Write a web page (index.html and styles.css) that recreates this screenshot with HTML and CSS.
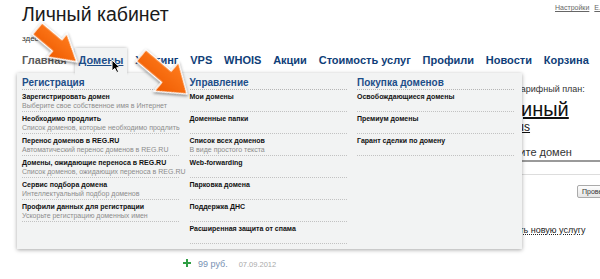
FILE: index.html
```html
<!DOCTYPE html>
<html>
<head>
    <title>Личный кабинет</title>
    <link rel="stylesheet" href="styles.css">
</head>
<body>
    <div class="header">
        <h1 class="title">Личный кабинет</h1>
        <div class="top-links"><a href="#">Настройки</a><a href="#">Е.Аксенова</a></div>
    </div>
    <div class="greeting">здесь</div>

    <div class="menu">
        <a href="#" class="menu-item home">Главная</a>
        <a href="#" class="menu-item active">Домены</a>
        <a href="#" class="menu-item">Хостинг</a>
        <a href="#" class="menu-item">VPS</a>
        <a href="#" class="menu-item">WHOIS</a>
        <a href="#" class="menu-item">Акции</a>
        <a href="#" class="menu-item">Стоимость услуг</a>
        <a href="#" class="menu-item">Профили</a>
        <a href="#" class="menu-item">Новости</a>
        <a href="#" class="menu-item">Корзина</a>

        <div class="dropdown">
            <div class="col">
                <h3 class="col-title">Регистрация</h3>
                <div class="item">
                    <div class="item-name">Зарегистрировать домен</div>
                    <div class="item-desc">Выберите свое собственное имя в Интернет</div>
                </div>
                <div class="item">
                    <div class="item-name">Необходимо продлить</div>
                    <div class="item-desc">Список доменов, которые необходимо продлить</div>
                </div>
                <div class="item">
                    <div class="item-name">Перенос доменов в REG.RU</div>
                    <div class="item-desc">Автоматический перенос доменов в REG.RU</div>
                </div>
                <div class="item">
                    <div class="item-name">Домены, ожидающие переноса в REG.RU</div>
                    <div class="item-desc">Список доменов, ожидающих переноса в REG.RU</div>
                </div>
                <div class="item">
                    <div class="item-name">Сервис подбора домена</div>
                    <div class="item-desc">Интеллектуальный подбор доменов</div>
                </div>
                <div class="item">
                    <div class="item-name">Профили данных для регистрации</div>
                    <div class="item-desc">Ускорьте регистрацию доменных имен</div>
                </div>
            </div>
            <div class="col">
                <h3 class="col-title">Управление</h3>
                <div class="item"><div class="item-name">Мои домены</div></div>
                <div class="item"><div class="item-name">Доменные папки</div></div>
                <div class="item">
                    <div class="item-name">Список всех доменов</div>
                    <div class="item-desc">В виде простого текста</div>
                </div>
                <div class="item"><div class="item-name">Web-forwarding</div></div>
                <div class="item"><div class="item-name">Парковка домена</div></div>
                <div class="item"><div class="item-name">Поддержка ДНС</div></div>
                <div class="item"><div class="item-name">Расширенная защита от спама</div></div>
            </div>
            <div class="col">
                <h3 class="col-title">Покупка доменов</h3>
                <div class="item"><div class="item-name">Освобождающиеся домены</div></div>
                <div class="item"><div class="item-name">Премиум домены</div></div>
                <div class="item"><div class="item-name">Гарант сделки по домену</div></div>
            </div>
        </div>
    </div>

    <div class="content">
        <div class="left">
            <div class="pay-row">
                <svg class="plus" width="8" height="8" viewBox="0 0 8 8"><path d="M3 0h2v3h3v2H5v3H3V5H0V3h3z" fill="#2f9e44"/></svg>
                <span class="sum">99 руб.</span>
                <span class="date">07.09.2012</span>
            </div>
        </div>
        <div class="side">
            <div class="plan-label">Ваш тарифный план:</div>
            <div class="plan-name"><a href="#">Единый</a></div>
            <div class="plan-extra"><a href="#">Bonus</a></div>
            <div class="domain-input">Введите домен</div>
            <div class="divider"></div>
            <div class="btn-row"><span class="check-btn">Проверить</span></div>
            <div class="order-link">Заказать новую услугу</div>
        </div>
    </div>

    <svg class="cursor" width="11" height="15" viewBox="0 0 11 15">
        <path d="M1 1 L1 12 L3.8 9.4 L5.8 13.5 L7.6 12.7 L5.7 8.7 L9.2 8.7 Z" fill="#000" stroke="#fff" stroke-width="1"/>
    </svg>

    <svg class="arrows" width="600" height="279" viewBox="0 0 600 279">
        <defs>
            <linearGradient id="orange" x1="0" y1="0" x2="0" y2="1">
                <stop offset="0" stop-color="#ff7d1e"/>
                <stop offset="1" stop-color="#ee5a00"/>
            </linearGradient>
        </defs>
        <polygon class="arrow" transform="translate(77 62) rotate(40)"
                 points="-52,-7.5 -26,-7.5 -26,-15.5 0,0 -26,15.5 -26,7.5 -52,7.5"/>
        <polygon class="arrow" transform="translate(187 94) rotate(40)"
                 points="-60,-7.5 -27,-7.5 -27,-19 0,0 -27,19 -27,7.5 -60,7.5"/>
    </svg>
</body>
</html>
```

FILE: styles.css
```css
html, body {
    overflow: hidden;
}

body {
    margin: 0;
    width: 600px;
    height: 279px;
    position: relative;
    font-family: "Liberation Sans", Arial, sans-serif;
    color: #222;
    background-color: #fff;
}

.header {
    display: flex;
    align-items: flex-start;
    padding: 3px 0 0 22px;
}

.title {
    margin: 0;
    font-size: 19.5px;
    font-weight: normal;
    line-height: 22px;
    color: #1a1a1a;
}

.top-links {
    margin-left: auto;
    width: 45px;
    white-space: nowrap;
    font-size: 7px;
    line-height: 9px;
}

.top-links a {
    color: #666;
    margin-right: 5px;
}

.greeting {
    padding-left: 22px;
    margin-top: 9px;
    font-size: 8px;
    line-height: 10px;
    color: #333;
}

.menu {
    position: relative;
    display: flex;
    gap: 3.8px;
    margin: 4px 0 0 18px;
}

.menu-item {
    font-size: 11px;
    font-weight: bold;
    line-height: 13px;
    padding: 6px 4px;
    color: #0f3e78;
    text-decoration: none;
    white-space: nowrap;
}

.menu-item.home {
    color: #5a5a5a;
}

.menu-item.active {
    position: relative;
    z-index: 3;
    color: #1d4e89;
    text-decoration: underline;
    background-color: #f2f3f3;
    box-shadow: 0 0 3px rgba(0, 0, 0, 0.3);
}

.menu-item.active::after {
    content: '';
    position: absolute;
    left: 0;
    right: 0;
    bottom: -4px;
    height: 5px;
    background-color: #f2f3f3;
}

.dropdown {
    position: absolute;
    top: 100%;
    left: -1px;
    z-index: 2;
    width: 505px;
    box-sizing: border-box;
    padding: 4px 0 5px 5px;
    display: grid;
    grid-template-columns: repeat(3, 157px);
    column-gap: 10.5px;
    align-items: start;
    background-color: #f2f3f3;
    box-shadow: 0 1px 4px rgba(0, 0, 0, 0.35);
}

.col-title {
    margin: 0;
    font-size: 10px;
    line-height: 12px;
    font-weight: bold;
    color: #1d4e89;
    border-bottom: 1px dotted #b5b5b5;
}

.item {
    padding: 2px 0 1px;
    min-height: 18px;
    border-bottom: 1px dotted #c2c2c2;
}

.item-name {
    font-size: 7px;
    line-height: 9px;
    font-weight: bold;
    color: #111;
    white-space: nowrap;
}

.item-desc {
    font-size: 7px;
    line-height: 9px;
    color: #8c8c8c;
    white-space: nowrap;
}

.content {
    display: flex;
    padding-left: 22px;
}

.left {
    width: 474px;
    flex-shrink: 0;
    box-sizing: border-box;
    padding: 185px 0 0 161px;
}

.pay-row {
    display: flex;
    align-items: baseline;
    font-size: 9px;
    line-height: 12px;
}

.plus {
    margin-right: 7px;
}

.sum {
    color: #7891b3;
    margin-right: 11px;
}

.date {
    font-size: 7.5px;
    color: #aaa;
}

.side {
    width: 110px;
    flex-shrink: 0;
    white-space: nowrap;
}

.plan-label {
    margin-top: 11px;
    font-size: 9px;
    line-height: 11px;
    color: #333;
}

.plan-name {
    margin-top: 3px;
    font-size: 20px;
    line-height: 23px;
}

.plan-name a,
.plan-extra a {
    color: #111;
}

.plan-extra {
    font-size: 12px;
    line-height: 13px;
}

.domain-input {
    margin-top: 12px;
    padding-bottom: 1px;
    font-size: 11px;
    line-height: 13px;
    text-indent: -2px;
    color: #333;
    border-bottom: 2px solid #9a9a9a;
}

.divider {
    margin-top: 12px;
    border-top: 1px solid #ddd;
}

.btn-row {
    margin-top: 5px;
    padding-left: 81px;
}

.check-btn {
    display: inline-block;
    font-size: 7px;
    line-height: 9px;
    padding: 1px 4px;
    color: #333;
    border: 1px solid #aaa;
    border-radius: 2px;
    background: linear-gradient(#fdfdfd, #e6e6e6);
}

.order-link {
    margin: 27px 0 0 -5px;
    font-size: 9px;
    line-height: 11px;
    color: #222;
    text-decoration: underline dotted;
}

.cursor {
    position: absolute;
    left: 111px;
    top: 59px;
    z-index: 4;
}

.arrows {
    position: absolute;
    left: 0;
    top: 0;
    z-index: 5;
    pointer-events: none;
}

.arrow {
    fill: url(#orange);
    stroke: #fff;
    stroke-width: 1.5;
    filter: drop-shadow(1px 1px 1.5px rgba(0, 0, 0, 0.45));
}
```
